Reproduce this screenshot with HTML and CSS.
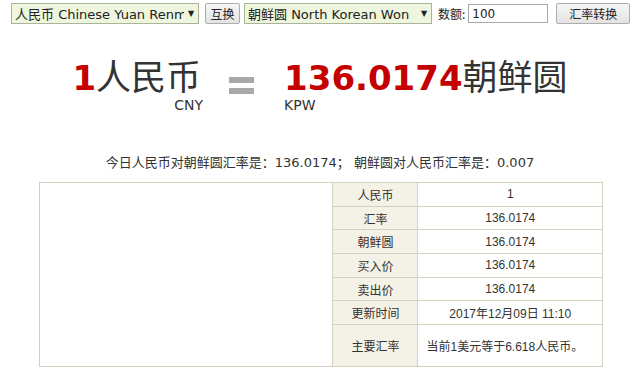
FILE: index.html
```html
<!DOCTYPE html>
<html lang="zh-CN">
  <head>
    <meta charset="UTF-8" />
    <meta name="viewport" content="width=device-width, initial-scale=1.0" />
    <title>人民币兑朝鲜圆汇率</title>
    <link rel="stylesheet" href="styles.css">
  </head>
  <body>
    <div class="toolbar">
      <div class="sel">
        <span class="sel-text">人民币 Chinese Yuan Renminbi</span>
        <span class="arrow">▼</span>
      </div>
      <button class="btn btn-swap" type="button">互换</button>
      <div class="sel">
        <span class="sel-text">朝鲜圆 North Korean Won</span>
        <span class="arrow">▼</span>
      </div>
      <label class="amount-label" for="txtAmount">数额:</label>
      <input class="amount" type="text" id="txtAmount" value="100" />
      <button class="btn btn-go" type="button">汇率转换</button>
    </div>

    <div class="result">
      <div class="cur">
        <div class="big"><b>1</b>人民币</div>
        <div class="code code-from">CNY</div>
      </div>
      <div class="eq"><span></span><span></span></div>
      <div class="cur">
        <div class="big"><b>136.0174</b>朝鲜圆</div>
        <div class="code">KPW</div>
      </div>
    </div>

    <p class="summary">今日人民币对朝鲜圆汇率是：136.0174； 朝鲜圆对人民币汇率是：0.007</p>

    <div class="panel">
      <div class="blank"></div>
      <table class="rates">
        <tr><th>人民币</th><td>1</td></tr>
        <tr><th>汇率</th><td>136.0174</td></tr>
        <tr><th>朝鲜圆</th><td>136.0174</td></tr>
        <tr><th>买入价</th><td>136.0174</td></tr>
        <tr><th>卖出价</th><td>136.0174</td></tr>
        <tr><th>更新时间</th><td>2017年12月09日 11:10</td></tr>
        <tr class="tall"><th>主要汇率</th><td class="left">当前1美元等于6.618人民币。</td></tr>
      </table>
    </div>
  </body>
</html>
```

FILE: styles.css
```css
body {
  margin: 0;
  font-family: "DejaVu Sans", "Noto Sans CJK SC", sans-serif;
  color: #333;
  background: #fff;
}
.toolbar {
  display: flex;
  align-items: center;
  padding: 3px 0 0 11px;
  height: 21px;
  font-size: 13px;
}
.sel {
  width: 186px;
  height: 19px;
  border: 1px solid #a9b49a;
  background: #eef6de;
  display: flex;
  align-items: center;
  overflow: hidden;
  box-sizing: content-box;
}
.sel-text {
  flex: 1;
  white-space: nowrap;
  overflow: hidden;
  padding-left: 3px;
  color: #222;
}
.arrow {
  font-size: 8px;
  width: 14px;
  text-align: center;
  color: #222;
}
.btn {
  height: 21px;
  border: 1px solid #adadad;
  border-radius: 2px;
  background: linear-gradient(#f6f6f6, #e3e3e3);
  font-family: "Noto Sans CJK SC", sans-serif;
  font-size: 12px;
  color: #222;
  padding: 0;
}
.btn-swap {
  width: 35px;
  margin: 0 4px 0 6px;
}
.amount-label {
  font-family: "Noto Sans CJK SC", sans-serif;
  font-size: 12px;
  margin: 0 3px 0 6px;
  color: #222;
}
.amount {
  width: 72px;
  height: 15px;
  border: 1px solid #a9a9a9;
  font-family: "DejaVu Sans", sans-serif;
  font-size: 12px;
  padding: 1px 3px;
  color: #222;
}
.btn-go {
  width: 74px;
  margin-left: 8px;
}
.result {
  display: flex;
  justify-content: center;
  align-items: flex-start;
  margin-top: 29px;
}
.cur {
  display: flex;
  flex-direction: column;
}
.big {
  font-family: "Noto Sans CJK SC", serif;
  font-size: 35px;
  line-height: 44px;
  height: 44px;
  color: #333;
  white-space: nowrap;
}
.big b {
  font-family: "DejaVu Sans", sans-serif;
  font-size: 34px;
  line-height: 1;
  color: #c40000;
}
.code {
  font-family: "DejaVu Sans", sans-serif;
  font-size: 14px;
  line-height: 18px;
  color: #333;
  margin-top: -1px;
}
.code-from {
  align-self: flex-end;
  margin-right: -2px;
}
.eq {
  display: flex;
  flex-direction: column;
  gap: 5px;
  margin: 24px 30px 0 28px;
}
.eq span {
  display: block;
  width: 25px;
  height: 6px;
  background: #a8a8a8;
}
.summary {
  margin: 38px 0 0;
  text-align: center;
  font-size: 13px;
  color: #333;
}
.panel {
  display: flex;
  margin: 11px 0 0 39px;
  width: 564px;
}
.blank {
  width: 293px;
  border: 1px solid #d6d0bf;
  border-right: none;
}
.rates {
  border-collapse: collapse;
  width: 271px;
  font-family: "Liberation Sans", "Noto Sans CJK SC", sans-serif;
  font-size: 12px;
  color: #333;
}
.rates th,
.rates td {
  border: 1px solid #d6d0bf;
  height: 22.7px;
  padding: 0;
  text-align: center;
  font-weight: normal;
}
.rates th {
  width: 84px;
  background: #f4f1e7;
}
.rates .tall th,
.rates .tall td {
  height: 41px;
}
.rates td.left {
  text-align: left;
  padding-left: 8px;
}
```
